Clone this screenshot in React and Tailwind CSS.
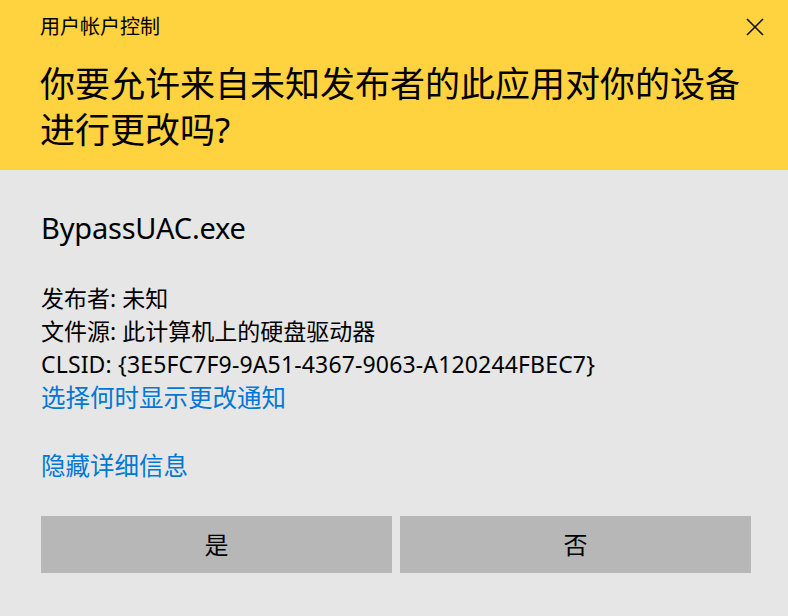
export default function App() {
  const font = { fontFamily: '"Noto Sans", "Noto Sans CJK SC", sans-serif' };
  return (
    <div className="w-[788px] h-[616px] bg-[#e6e6e6] text-black overflow-hidden" style={font}>
      <div className="h-[170px] bg-[#ffd23f] pl-[40px] pr-[20px] pt-[14px]">
        <div className="flex items-center justify-between">
          <div className="text-[20px] leading-[26px]">用户帐户控制</div>
          <svg width="20" height="20" viewBox="0 0 20 20" className="mr-[3px]">
            <path d="M2 2 L18 18 M18 2 L2 18" stroke="#111" strokeWidth="1.6" fill="none" />
          </svg>
        </div>
        <div className="mt-[21px] text-[35px] leading-[46px] pr-[20px]">
          你要允许来自未知发布者的此应用对你的设备进行更改吗?
        </div>
      </div>
      <div className="pl-[41px] pr-[37px] pt-[38px]">
        <div className="text-[29px] leading-[40px] tracking-[-0.2px]">BypassUAC.exe</div>
        <div className="mt-[34px] text-[23px] leading-[33px]">
          <div>发布者: 未知</div>
          <div>文件源: 此计算机上的硬盘驱动器</div>
          <div className="tracking-[0.15px]">CLSID: {"{3E5FC7F9-9A51-4367-9063-A120244FBEC7}"}</div>
          <div className="text-[#0078d7] text-[24.5px]">选择何时显示更改通知</div>
        </div>
        <div className="mt-[35px] text-[24.5px] leading-[33px] text-[#0078d7]">隐藏详细信息</div>
        <div className="mt-[34px] grid grid-cols-2 gap-2">
          <button className="h-[57px] bg-[#b7b7b7] text-[24px]">是</button>
          <button className="h-[57px] bg-[#b7b7b7] text-[24px]">否</button>
        </div>
      </div>
    </div>
  );
}
